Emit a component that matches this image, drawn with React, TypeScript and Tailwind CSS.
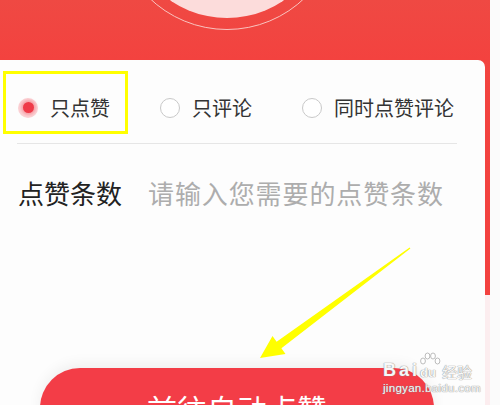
const font = { fontFamily: '"Noto Sans CJK SC", "Noto Sans", sans-serif' };
const latin = { fontFamily: '"Liberation Sans", Arial, sans-serif' };

function Radio({ checked, label }: { checked?: boolean; label: string }) {
  return (
    <div className="flex items-center gap-[12px]">
      {checked ? (
        <span className="flex h-[20px] w-[20px] items-center justify-center rounded-full bg-[#fbd3d6]">
          <span className="h-[11px] w-[11px] rounded-full bg-[#ef3a48] shadow-[0_0_3px_2px_rgba(239,58,72,0.35)]" />
        </span>
      ) : (
        <span className="h-[20px] w-[20px] rounded-full border border-[#c9c9c9] bg-white" />
      )}
      <span className="text-[20px] leading-none text-[#333]">{label}</span>
    </div>
  );
}

export default function App() {
  return (
    <div className="relative flex h-[405px] w-[500px] overflow-hidden bg-[#fbfbfb]" style={font}>
      {/* phone screen */}
      <div className="relative flex w-[490px] flex-col bg-[linear-gradient(to_bottom,#f2443f_0px,#f3413f_295px,#fcedef_295px,#fcedef_100%)]">
        {/* header decoration */}
        <div className="relative h-[60px] shrink-0 bg-[linear-gradient(to_bottom,#ef4943,#f3423f)]">
          <div className="absolute left-[115px] top-[-194px] h-[224px] w-[224px] rounded-full border-[1.5px] border-[#f9c3bf]" />
          <div className="absolute left-[127px] top-[-182px] h-[200px] w-[200px] rounded-full bg-[#fcdcdb]" />
        </div>

        {/* card */}
        <div className="flex w-[485px] flex-1 flex-col rounded-tr-[7px] bg-[#fdfdfd]">
          <div className="flex h-[83px] items-center pl-[18px] pt-[12px]">
            <Radio checked label="只点赞" />
            <div className="ml-[50px]">
              <Radio label="只评论" />
            </div>
            <div className="ml-[50px]">
              <Radio label="同时点赞评论" />
            </div>
          </div>
          <div className="ml-[17px] h-px w-[440px] bg-[#e6e6e6]" />
          <div className="flex h-[98px] items-center pl-[18px]">
            <span className="text-[26px] leading-none text-[#222]">点赞条数</span>
            <span className="ml-[26px] text-[26px] leading-none tracking-[0.9px] text-[#adadad]">
              请输入您需要的点赞条数
            </span>
          </div>
          <div className="mt-[126px] ml-[40px] flex h-[80px] w-[394px] shrink-0 items-center justify-center rounded-[40px] bg-[#f33d47] shadow-[0_-4px_14px_rgba(0,0,0,0.06)]">
            <span className="text-[30px] leading-none text-white">前往自动点赞</span>
          </div>
        </div>
      </div>

      {/* yellow annotation box */}
      <div className="absolute left-[3px] top-[71px] h-[63px] w-[125px] border-[3px] border-[#ffff00]" />

      {/* yellow arrow */}
      <svg className="absolute left-0 top-0" width="500" height="405" viewBox="0 0 500 405">
        <polygon
          points="260,358 272.5,336 276.6,341.8 409.6,247.4 410.4,248.6 281.4,348.2 285.5,354"
          fill="#ffff00"
        />
      </svg>

      {/* watermark */}
      <div className="absolute left-[383px] top-[361px] flex w-[90px] flex-col text-white/95 [text-shadow:0_0_1px_#8f8f8f,0_0_1px_#8f8f8f]">
        <div className="flex items-end leading-none">
          <span className="text-[18px] font-bold tracking-[3px]" style={latin}>
            Bai
          </span>
          <span className="relative w-[21px] text-[13px] font-bold" style={latin}>
            <svg className="absolute left-[-1px] top-[-14px]" width="22" height="15" viewBox="0 0 22 15">
              <g fill="white" stroke="#a0a0a0" strokeWidth="0.7">
                <ellipse cx="4" cy="9" rx="2.4" ry="3" />
                <ellipse cx="8.5" cy="4" rx="2.4" ry="3" />
                <ellipse cx="14" cy="4" rx="2.4" ry="3" />
                <ellipse cx="18.5" cy="9" rx="2.4" ry="3" />
              </g>
            </svg>
            du
          </span>
          <span className="ml-[1px] text-[15px]">经验</span>
        </div>
        <span className="mt-[4px] text-[11.5px] leading-none tracking-[0.3px]" style={latin}>
          jingyan.baidu.com
        </span>
      </div>
    </div>
  );
}
